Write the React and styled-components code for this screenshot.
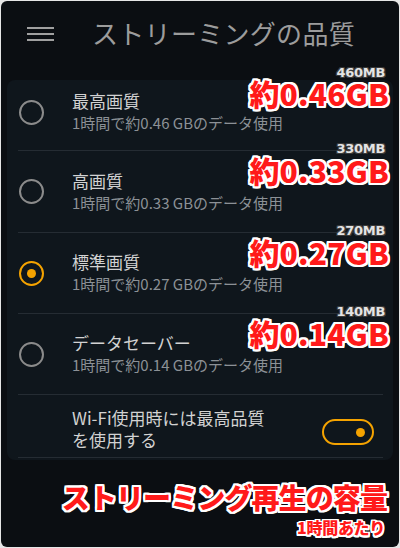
import React from "react";
import styled, { createGlobalStyle } from "styled-components";

const Global = createGlobalStyle`
  html, body {
    margin: 0;
    padding: 0;
    background: #e6e6e6;
  }
  * { box-sizing: border-box; }
`;

const jp = `"Noto Sans CJK JP", "Noto Sans", sans-serif`;

const outline = (c, w) =>
  [
    [w, 0], [-w, 0], [0, w], [0, -w],
    [w, w], [-w, w], [w, -w], [-w, -w],
    [w, w / 2], [-w, w / 2], [w, -w / 2], [-w, -w / 2],
    [w / 2, w], [-w / 2, w], [w / 2, -w], [-w / 2, -w],
  ]
    .map(([x, y]) => `${x}px ${y}px 0 ${c}`)
    .join(", ");

const Frame = styled.div`
  position: relative;
  width: 398px;
  height: 546px;
  margin: 1px;
  background: #0b0e12;
  border-radius: 6px;
  display: flex;
  flex-direction: column;
  font-family: ${jp};
  overflow: hidden;
`;

const Header = styled.header`
  height: 79px;
  display: flex;
  align-items: flex-start;
  padding: 12px 0 0 26px;
  gap: 38px;
`;

const Burger = styled.div`
  width: 27px;
  padding-top: 14px;
  display: flex;
  flex-direction: column;
  gap: 4px;
  span {
    display: block;
    height: 2px;
    background: #a0a0a0;
  }
`;

const Title = styled.h1`
  margin: 0;
  font-size: 26px;
  font-weight: 400;
  color: #9c9c9c;
  letter-spacing: 0.3px;
  line-height: 40px;
`;

const Card = styled.div`
  margin: 0 6px 0 6px;
  background: #0f161c;
  border-radius: 8px;
  padding: 0 10px 2px 11px;
`;

const Row = styled.div`
  position: relative;
  display: flex;
  align-items: center;
  height: ${(p) => p.$h}px;
  padding-bottom: ${(p) => p.$pb || 0}px;
  border-bottom: 1px solid #252c33;
`;

const Radio = styled.div`
  width: 25px;
  height: 25px;
  margin-left: 1px;
  border-radius: 50%;
  border: 2px solid ${(p) => (p.$on ? "#f5a300" : "#8b8b8b")};
  display: flex;
  align-items: center;
  justify-content: center;
  flex-shrink: 0;
  &::after {
    content: "";
    display: ${(p) => (p.$on ? "block" : "none")};
    width: 9px;
    height: 9px;
    border-radius: 50%;
    background: #f5a300;
  }
`;

const Texts = styled.div`
  margin-left: 28px;
  display: flex;
  flex-direction: column;
`;

const Name = styled.div`
  font-size: 17px;
  color: #d2d2d2;
  line-height: 22px;
`;

const Sub = styled.div`
  font-size: 15px;
  color: #8c9196;
  line-height: 22px;
`;

const Big = styled.div`
  position: absolute;
  right: -6px;
  top: ${(p) => p.$top}px;
  font-size: 30px;
  font-weight: 900;
  color: #ff1a1a;
  line-height: 32px;
  letter-spacing: 0.2px;
  text-shadow: ${outline("#ffffff", 2)};
`;

const Small = styled.div`
  position: absolute;
  right: -2px;
  top: ${(p) => p.$top}px;
  font-family: "DejaVu Sans", sans-serif;
  font-size: 13px;
  font-weight: 700;
  color: #e4e4e4;
  line-height: 14px;
  letter-spacing: -0.3px;
  text-shadow: ${outline("#3a3a3a", 1)};
`;

const WifiText = styled.div`
  margin-left: 54px;
  margin-top: 6px;
  font-size: 17px;
  color: #d2d2d2;
  line-height: 22px;
`;

const Toggle = styled.div`
  margin-left: auto;
  margin-right: 9px;
  margin-top: 12px;
  width: 52px;
  height: 26px;
  border: 2.5px solid #f5a300;
  border-radius: 13px;
  display: flex;
  align-items: center;
  justify-content: flex-end;
  padding-right: 7px;
  &::after {
    content: "";
    width: 9px;
    height: 9px;
    border-radius: 50%;
    background: #f5a300;
  }
`;

const Footer = styled.div`
  flex: 1;
  display: flex;
  flex-direction: column;
  align-items: flex-end;
  padding: 18px 12px 0 0;
`;

const Caption = styled.div`
  font-size: 28px;
  font-weight: 900;
  color: #ff1a1a;
  line-height: 38px;
  letter-spacing: -0.9px;
  text-shadow: ${outline("#ffffff", 2)};
`;

const CaptionSub = styled.div`
  margin-top: 1px;
  margin-right: 2px;
  font-size: 16px;
  font-weight: 900;
  color: #ff1a1a;
  line-height: 20px;
  letter-spacing: -0.3px;
  text-shadow: ${outline("#ffffff", 1.5)};
`;

const options = [
  { name: "最高画質", gb: "0.46", mb: "460MB", h: 71, pb: 6 },
  { name: "高画質", gb: "0.33", mb: "330MB", h: 82 },
  { name: "標準画質", gb: "0.27", mb: "270MB", h: 81, on: true },
  { name: "データセーバー", gb: "0.14", mb: "140MB", h: 81 },
];

export default function App() {
  return (
    <>
      <Global />
      <Frame>
        <Header>
          <Burger>
            <span />
            <span />
            <span />
          </Burger>
          <Title>ストリーミングの品質</Title>
        </Header>
        <Card>
          {options.map((o, i) => (
            <Row key={o.name} $h={o.h} $pb={o.pb}>
              <Radio $on={o.on} />
              <Texts>
                <Name>{o.name}</Name>
                <Sub>1時間で約{o.gb} GBのデータ使用</Sub>
              </Texts>
              <Small $top={i === 0 ? -14 : -9}>{o.mb}</Small>
              <Big $top={i === 0 ? -3 : 3}>約{o.gb}GB</Big>
            </Row>
          ))}
          <Row $h={63}>
            <WifiText>
              Wi-Fi使用時には最高品質
              <br />
              を使用する
            </WifiText>
            <Toggle />
          </Row>
        </Card>
        <Footer>
          <Caption>ストリーミング再生の容量</Caption>
          <CaptionSub>1時間あたり</CaptionSub>
        </Footer>
      </Frame>
    </>
  );
}
